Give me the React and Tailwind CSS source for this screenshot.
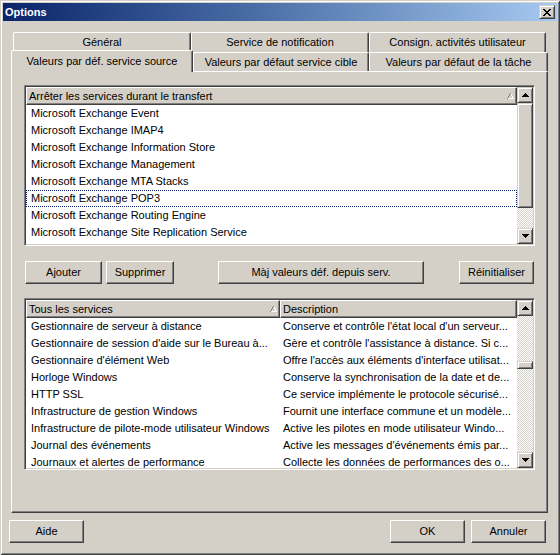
import React from 'react';

const raised = 'border border-t-white border-l-white border-r-[#404040] border-b-[#404040] shadow-[inset_-1px_-1px_#808080]';
const raisedSoft = 'border border-t-[#d4d0c8] border-l-[#d4d0c8] border-r-[#404040] border-b-[#404040] shadow-[inset_1px_1px_#fff,inset_-1px_-1px_#808080]';
const sunken = 'border border-t-[#808080] border-l-[#808080] border-r-white border-b-white shadow-[inset_1px_1px_#404040,inset_-1px_-1px_#d4d0c8] p-px';
const checker = 'bg-[image:repeating-conic-gradient(#fff_0_25%,#d4d0c8_0_50%)] bg-[length:2px_2px]';

const exchange = [
  'Microsoft Exchange Event',
  'Microsoft Exchange IMAP4',
  'Microsoft Exchange Information Store',
  'Microsoft Exchange Management',
  'Microsoft Exchange MTA Stacks',
  'Microsoft Exchange POP3',
  'Microsoft Exchange Routing Engine',
  'Microsoft Exchange Site Replication Service',
  'Microsoft Exchange System Attendant',
];

const services = [
  ['Gestionnaire de serveur à distance', "Conserve et contrôle l'état local d'un serveur..."],
  ["Gestionnaire de session d'aide sur le Bureau à...", "Gère et contrôle l'assistance à distance. Si c..."],
  ["Gestionnaire d'élément Web", "Offre l'accès aux éléments d'interface utilisat..."],
  ['Horloge Windows', 'Conserve la synchronisation de la date et de...'],
  ['HTTP SSL', 'Ce service implémente le protocole sécurisé...'],
  ['Infrastructure de gestion Windows', 'Fournit une interface commune et un modèle...'],
  ['Infrastructure de pilote-mode utilisateur Windows', 'Active les pilotes en mode utilisateur Windo...'],
  ['Journal des événements', "Active les messages d'événements émis par..."],
  ['Journaux et alertes de performance', 'Collecte les données de performances des o...'],
];

const Arrow = ({ down }) => (
  <svg width="7" height="4" viewBox="0 0 7 4" shapeRendering="crispEdges" className={down ? 'rotate-180' : ''}>
    <path d="M3 0h1v1H3zM2 1h3v1H2zM1 2h5v1H1zM0 3h7v1H0z" fill="#000" />
  </svg>
);

const SortMark = () => (
  <svg width="7" height="6" viewBox="0 0 7 6" shapeRendering="crispEdges">
    <path d="M3 0h1v1H3zM2 1h1v2H2zM1 3h1v2H1zM0 5h1v1H0z" fill="#808080" />
    <path d="M4 1h1v2H4zM5 3h1v2H5zM1 5h6v1H1z" fill="#fff" />
  </svg>
);

const ScrollBar = ({ parts }) => (
  <div className="w-[16px] shrink-0 flex flex-col">
    {parts.map(([kind, h], i) => {
      if (kind === 'up' || kind === 'down')
        return (
          <div key={i} className={`${raisedSoft} bg-[#d4d0c8] flex items-center justify-center shrink-0`} style={{ height: h }}>
            <Arrow down={kind === 'down'} />
          </div>
        );
      if (kind === 'thumb')
        return <div key={i} className={`${raisedSoft} bg-[#d4d0c8] shrink-0`} style={{ height: h }} />;
      return <div key={i} className={`${checker} shrink-0`} style={{ height: h }} />;
    })}
  </div>
);

const Btn = ({ children, className = '' }) => (
  <div className={`${raised} bg-[#d4d0c8] h-[23px] flex items-center justify-center shrink-0 ${className}`}>{children}</div>
);

const Tab = ({ children, className = '' }) => (
  <div className={`border-t border-l border-r border-t-white border-l-white border-r-[#404040] shadow-[inset_-1px_0_#808080] rounded-t-[2px] flex items-center justify-center whitespace-nowrap shrink-0 ${className}`}>
    {children}
  </div>
);

export default function App() {
  return (
    <div className="w-[560px] h-[555px] bg-[#d4d0c8] p-[3px] flex flex-col text-[11px] text-black font-['Liberation_Sans',Arial,sans-serif] shadow-[inset_1px_1px_#d4d0c8,inset_-1px_-1px_#404040,inset_2px_2px_#fff,inset_-2px_-2px_#808080] overflow-hidden">
      {/* title bar */}
      <div className="h-[18px] shrink-0 bg-linear-to-r from-[#0a246a] to-[#a6caf0] flex items-center justify-between pl-[2px] pr-[2px]">
        <span className="text-white font-bold">Options</span>
        <div className={`${raisedSoft} bg-[#d4d0c8] w-[16px] h-[14px] flex items-center justify-center`}>
          <svg width="8" height="7" viewBox="0 0 8 7" shapeRendering="crispEdges">
            <path d="M0 0h2v1H0zM6 0h2v1H6zM1 1h2v1H1zM5 1h2v1H5zM2 2h4v1H2zM3 3h2v1H3zM2 4h4v1H2zM1 5h2v1H1zM5 5h2v1H5zM0 6h2v1H0zM6 6h2v1H6z" fill="#000" />
          </svg>
        </div>
      </div>

      {/* tabs, back row */}
      <div className="mt-[11px] ml-[10px] flex">
        <Tab className="w-[178px] h-[20px]">Général</Tab>
        <Tab className="w-[178px] h-[20px]">Service de notification</Tab>
        <Tab className="w-[177px] h-[20px]">Consign. activités utilisateur</Tab>
      </div>
      {/* tabs, front row */}
      <div className="ml-[8px] flex items-end h-[19px]">
        <Tab className="w-[182px] h-[22px] -mb-px relative z-10 bg-[#d4d0c8]">Valeurs par déf. service source</Tab>
        <Tab className="w-[176px] h-[19px]">Valeurs par défaut service cible</Tab>
        <Tab className="w-[179px] h-[19px]">Valeurs par défaut de la tâche</Tab>
      </div>

      {/* tab page */}
      <div className={`${raised} ml-[8px] w-[537px] h-[442px] shrink-0 pt-[13px] pl-[12px] flex flex-col`}>
        <div className={`${sunken} w-[511px] h-[161px] flex bg-white`}>
          <div className="flex-1 overflow-hidden flex flex-col">
            <div className={`${raised} bg-[#d4d0c8] h-[18px] shrink-0 flex items-center justify-between pl-[2px] pr-[2px]`}>
              <span>Arrêter les services durant le transfert</span>
              <SortMark />
            </div>
            {exchange.map((s, i) => (
              <div
                key={s}
                className={`h-[17px] shrink-0 leading-[15px] pl-[4px] whitespace-nowrap border border-dotted ${i === 5 ? 'border-[#0a246a]' : 'border-transparent'}`}
              >
                {s}
              </div>
            ))}
          </div>
          <ScrollBar parts={[['up', 16], ['thumb', 105], ['track', 20], ['down', 16]]} />
        </div>

        <div className="mt-[15px] flex">
          <Btn className="ml-px w-[77px]">Ajouter</Btn>
          <Btn className="ml-[4px] w-[68px]">Supprimer</Btn>
          <Btn className="ml-[44px] w-[206px]">Màj valeurs déf. depuis serv.</Btn>
          <Btn className="ml-[35px] w-[75px]">Réinitialiser</Btn>
        </div>

        <div className={`${sunken} mt-[14px] w-[511px] h-[172px] flex bg-white`}>
          <div className="flex-1 overflow-hidden flex flex-col">
            <div className="h-[18px] shrink-0 flex">
              <div className={`${raised} bg-[#d4d0c8] w-[254px] shrink-0 flex items-center justify-between pl-[2px] pr-[2px]`}>
                <span>Tous les services</span>
                <SortMark />
              </div>
              <div className={`${raised} bg-[#d4d0c8] flex-1 flex items-center pl-[2px]`}>Description</div>
            </div>
            {services.map(([a, b]) => (
              <div key={a} className="h-[17px] shrink-0 flex items-center whitespace-nowrap">
                <div className="w-[254px] shrink-0 pl-[5px] overflow-hidden">{a}</div>
                <div className="flex-1 pl-[3px] overflow-hidden">{b}</div>
              </div>
            ))}
          </div>
          <ScrollBar parts={[['up', 16], ['track', 45], ['thumb', 8], ['track', 83], ['down', 16]]} />
        </div>
      </div>

      {/* dialog buttons */}
      <div className="mt-[7px] flex">
        <Btn className="ml-[6px] w-[75px]">Aide</Btn>
        <Btn className="ml-auto w-[75px]">OK</Btn>
        <Btn className="ml-[6px] mr-[11px] w-[75px]">Annuler</Btn>
      </div>
    </div>
  );
}
